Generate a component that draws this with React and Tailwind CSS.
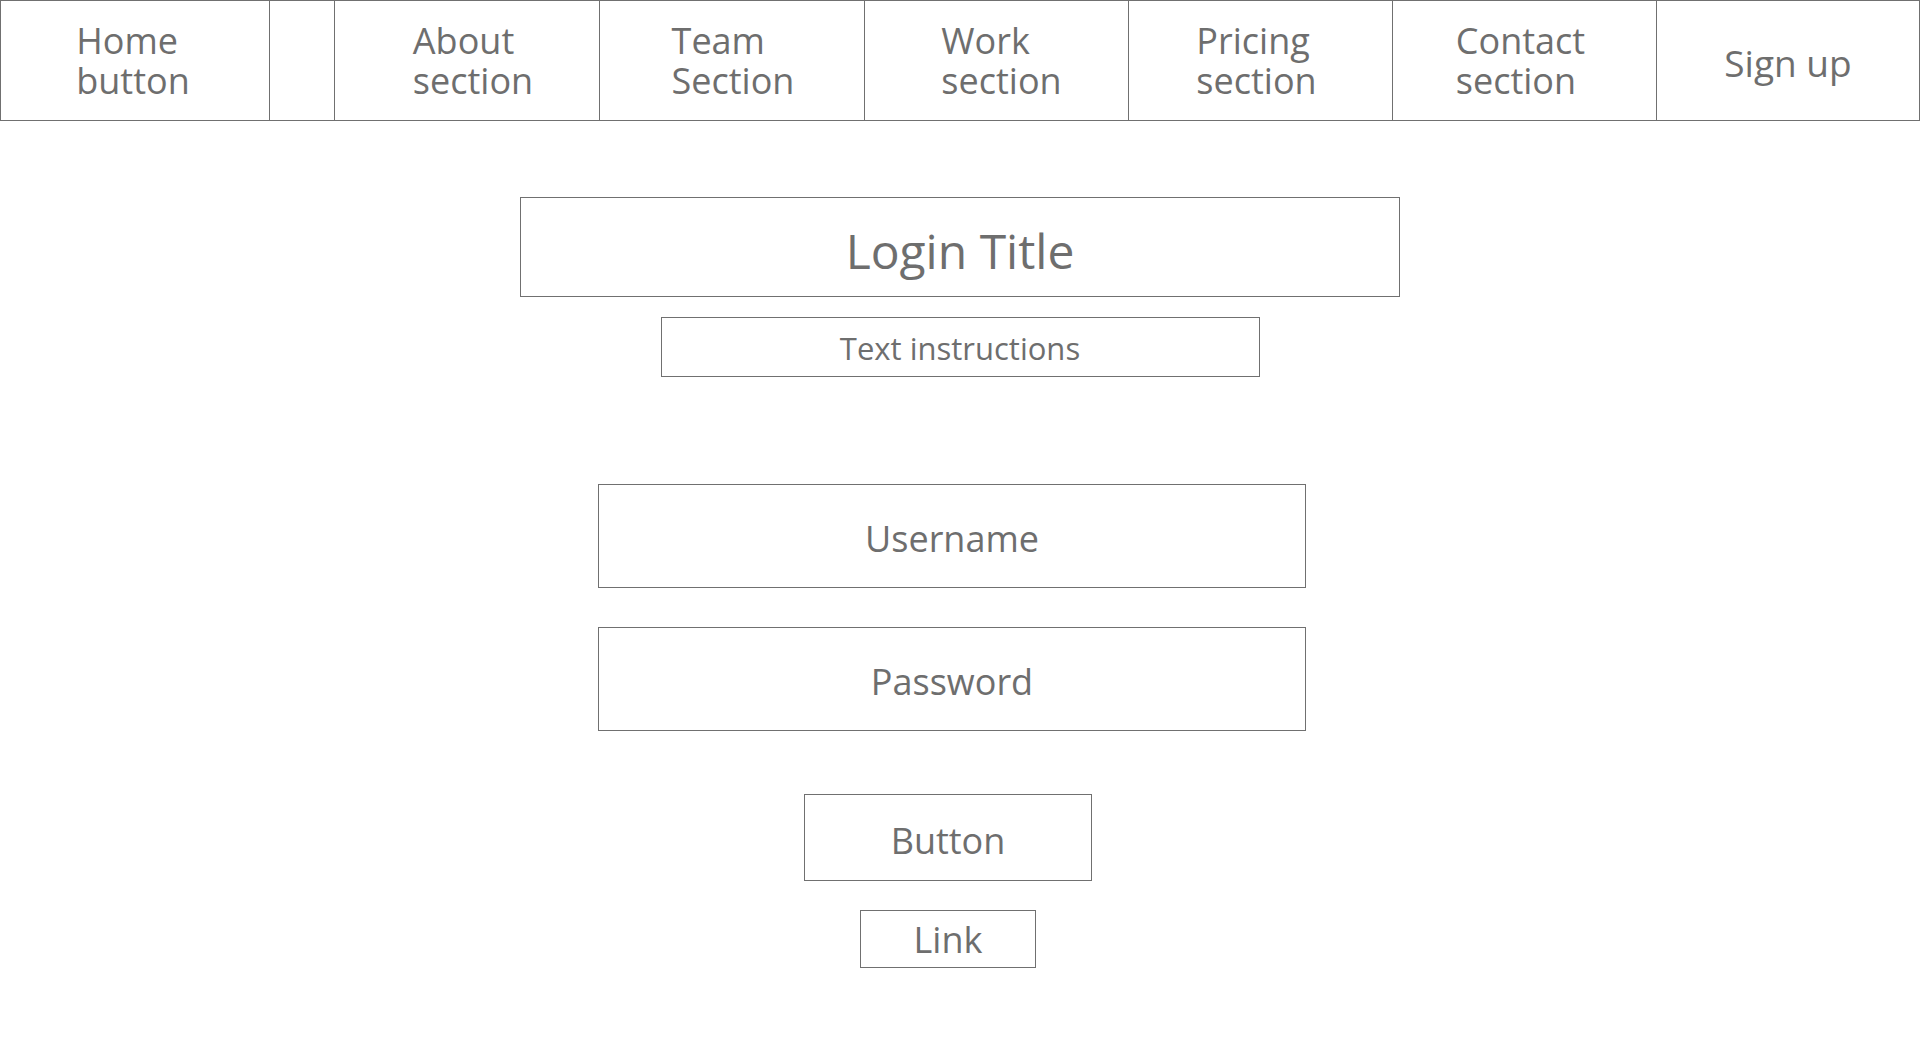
const NAV_ITEMS = [
  { label: ['Home', 'button'], w: 'w-[268px]', pad: 'pr-[4px]' },
  { label: [], w: 'w-[65px]', pad: '' },
  { label: ['About', 'section'], w: 'w-[265px]', pad: 'pl-[12px]' },
  { label: ['Team', 'Section'], w: 'w-[265px]', pad: 'pl-[2px]' },
  { label: ['Work', 'section'], w: 'w-[264px]', pad: 'pl-[10px]' },
  { label: ['Pricing', 'section'], w: 'w-[264px]', pad: 'pr-[8px]' },
  { label: ['Contact', 'section'], w: 'w-[264px]', pad: 'pr-[8px]' },
]

function NavCell({ label, w, pad, first }) {
  return (
    <div
      className={`${w} ${pad} shrink-0 h-full flex items-center justify-center ${
        first ? '' : 'border-l border-[#707070]'
      }`}
    >
      {label.length > 0 && (
        <div className="text-left text-[36px] leading-[40px]">
          {label.map(line => (
            <div key={line}>{line}</div>
          ))}
        </div>
      )}
    </div>
  )
}

export default function App() {
  return (
    <div className="min-h-screen bg-white text-[#6e6e6e] font-['Open_Sans',sans-serif]">
      {/* Top nav */}
      <nav className="flex h-[121px] border border-[#707070]">
        {NAV_ITEMS.map((item, i) => (
          <NavCell key={i} {...item} first={i === 0} />
        ))}
        <div className="flex-1 h-full flex items-center justify-center border-l border-[#707070] text-[37px] pt-[4px]">
          Sign up
        </div>
      </nav>

      {/* Login form */}
      <div className="flex flex-col items-center">
        <div className="mt-[76px] w-[880px] h-[100px] border border-[#707070] flex items-center justify-center text-[48px] pt-[8px]">
          Login Title
        </div>
        <div className="mt-[20px] w-[599px] h-[60px] border border-[#707070] flex items-center justify-center text-[31px] pt-[2px]">
          Text instructions
        </div>

        <div className="mt-[107px] mr-[16px] w-[708px] h-[104px] border border-[#707070] flex items-center justify-center text-[36px] pt-[6px]">
          Username
        </div>
        <div className="mt-[39px] mr-[16px] w-[708px] h-[104px] border border-[#707070] flex items-center justify-center text-[36px] pt-[6px]">
          Password
        </div>

        <div className="mt-[63px] mr-[24px] w-[288px] h-[87px] border border-[#707070] flex items-center justify-center text-[36px] pt-[6px]">
          Button
        </div>
        <div className="mt-[29px] mr-[24px] w-[176px] h-[58px] border border-[#707070] flex items-center justify-center text-[36px] pt-[2px]">
          Link
        </div>
      </div>
    </div>
  )
}
